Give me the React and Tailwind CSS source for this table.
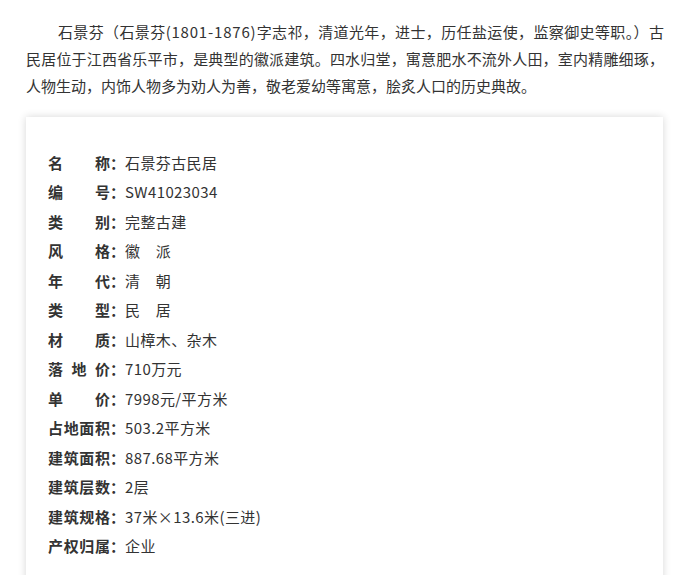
import React from "react";

const rows = [
    ["名称", "石景芬古民居"],
    ["编号", "SW41023034"],
    ["类别", "完整古建"],
    ["风格", "徽\u3000派"],
    ["年代", "清\u3000朝"],
    ["类型", "民\u3000居"],
    ["材质", "山樟木、杂木"],
    ["落地价", "710万元"],
    ["单价", "7998元/平方米"],
    ["占地面积", "503.2平方米"],
    ["建筑面积", "887.68平方米"],
    ["建筑层数", "2层"],
    ["建筑规格", "37米×13.6米(三进)"],
    ["产权归属", "企业"],
];

const App = () => {
    return (
        <div
            className="min-h-screen bg-white text-[#333] px-[26px] pt-[18px]"
            style={{ fontFamily: '"Noto Sans CJK SC", "Noto Sans", sans-serif' }}
        >
            <p className="w-[638px] text-[15px] leading-[27px] indent-[32px] text-justify">
                石景芬（石景芬<span className="tracking-[0.8px]">(1801-1876)</span>字志祁，清道光年，进士，历任盐运使，监察御史等职。）古民居位于江西省乐平市，是典型的徽派建筑。四水归堂，寓意肥水不流外人田，室内精雕细琢，人物生动，内饰人物多为劝人为善，敬老爱幼等寓意，脍炙人口的历史典故。
            </p>

            <div className="mt-[18px] w-[637px] bg-white shadow-[0_0_8px_rgba(0,0,0,0.16)] pl-[22px] pt-[31px] pb-[40px]">
                {rows.map(([label, value]) => (
                    <div key={label} className="flex items-center h-[29.5px] text-[15px]">
                        <span className="w-[62px] shrink-0 font-bold text-justify [text-align-last:justify]">
                            {label}
                        </span>
                        <span className="shrink-0 font-bold">：</span>
                        <span className="tracking-[0.4px]">{value}</span>
                    </div>
                ))}
            </div>
        </div>
    );
};

export default App;
